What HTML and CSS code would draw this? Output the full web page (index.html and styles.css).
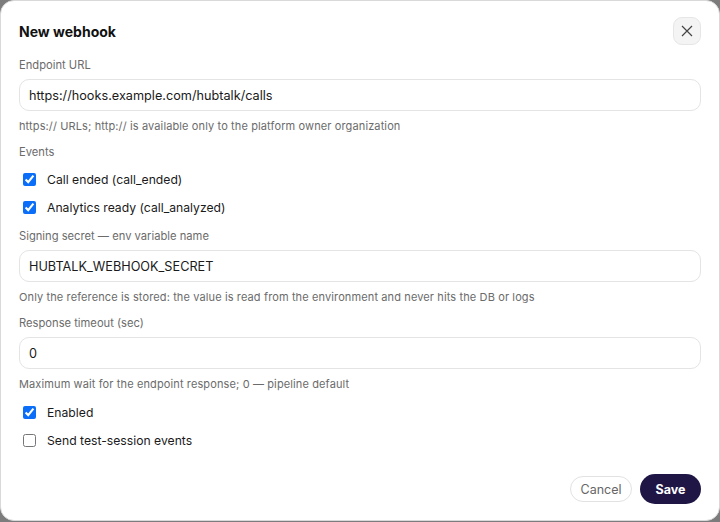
FILE: index.html
```html
<!DOCTYPE html>
<html>
<head>
<meta charset="utf-8">
<link rel="stylesheet" href="styles.css">
</head>
<body>
<div class="dialog">
  <div class="header">
    <h2 class="title">New webhook</h2>
    <button class="close" aria-label="Close">
      <svg width="12" height="12" viewBox="0 0 12 12"><path d="M1 1L11 11M11 1L1 11" stroke="#444" stroke-width="1.2" fill="none"/></svg>
    </button>
  </div>
  <div class="field first">
    <div class="label">Endpoint URL</div>
    <div class="input">https://hooks.example.com/hubtalk/calls</div>
    <div class="hint">https:// URLs; http:// is available only to the platform owner organization</div>
  </div>
  <div class="field">
    <div class="label">Events</div>
    <div class="checks">
      <label class="check"><input type="checkbox" checked><span>Call ended (call_ended)</span></label>
      <label class="check"><input type="checkbox" checked><span>Analytics ready (call_analyzed)</span></label>
    </div>
  </div>
  <div class="field">
    <div class="label">Signing secret — env variable name</div>
    <div class="input">HUBTALK_WEBHOOK_SECRET</div>
    <div class="hint">Only the reference is stored: the value is read from the environment and never hits the DB or logs</div>
  </div>
  <div class="field">
    <div class="label">Response timeout (sec)</div>
    <div class="input">0</div>
    <div class="hint">Maximum wait for the endpoint response; 0 — pipeline default</div>
  </div>
  <div class="field checks-only">
    <div class="checks">
      <label class="check"><input type="checkbox" checked><span>Enabled</span></label>
      <label class="check"><input type="checkbox"><span>Send test-session events</span></label>
    </div>
  </div>
  <div class="footer">
    <button class="btn cancel">Cancel</button>
    <button class="btn save">Save</button>
  </div>
</div>
</body>
</html>
```
FILE: styles.css
```css
html, body {
  margin: 0;
  padding: 0;
  background: #7c7c7c;
  font-family: Inter, "Liberation Sans", sans-serif;
}
.dialog {
  box-sizing: border-box;
  width: 720px;
  height: 521px;
  background: #fff;
  border: 1px solid #d9d9d9;
  border-radius: 14px;
  padding: 16px 18px 0 18px;
}
.header {
  display: flex;
  justify-content: space-between;
  align-items: center;
  height: 28px;
}
.title {
  margin: 0;
  font-size: 14px;
  font-weight: 700;
  color: #111;
}
.close {
  width: 28px;
  height: 28px;
  border-radius: 9px;
  border: 1px solid #e6e6e6;
  background: #f4f4f4;
  display: flex;
  align-items: center;
  justify-content: center;
  padding: 0;
}
.field {
  margin-top: 10px;
}
.field.first {
  margin-top: 12px;
}
.field.checks-only {
  margin-top: 9px;
}
.label {
  font-size: 11.2px;
  color: #6b6b6b;
  line-height: 16px;
}
.input {
  margin-top: 6px;
  height: 32px;
  box-sizing: border-box;
  border: 1px solid #e4e4e4;
  border-radius: 10px;
  padding: 0 9px;
  font-size: 12.7px;
  color: #1a1a1a;
  display: flex;
  align-items: center;
}
.hint {
  margin-top: 7px;
  font-size: 11px;
  letter-spacing: 0.12px;
  color: #6b6b6b;
  line-height: 16px;
}
.checks {
  display: flex;
  flex-direction: column;
  gap: 6px;
  margin-top: 8px;
}
.checks-only .checks {
  margin-top: 0;
}
.check {
  display: flex;
  align-items: center;
  height: 22px;
  font-size: 12.2px;
  color: #1a1a1a;
}
.check input {
  margin: 0 11px 0 4px;
  width: 13px;
  height: 13px;
  accent-color: #0b6ef9;
}
.footer {
  display: flex;
  justify-content: flex-end;
  align-items: center;
  gap: 8px;
  margin-top: 23px;
}
.btn {
  font-family: Inter, "Liberation Sans", sans-serif;
  border-radius: 15px;
  font-size: 12.5px;
}
.cancel {
  height: 26px;
  width: 62px;
  padding: 0;
  background: #fff;
  border: 1px solid #e2e2e2;
  color: #666;
}
.save {
  height: 30px;
  width: 61px;
  padding: 0;
  background: #1f1646;
  border: none;
  color: #fff;
  font-weight: 700;
}
```
